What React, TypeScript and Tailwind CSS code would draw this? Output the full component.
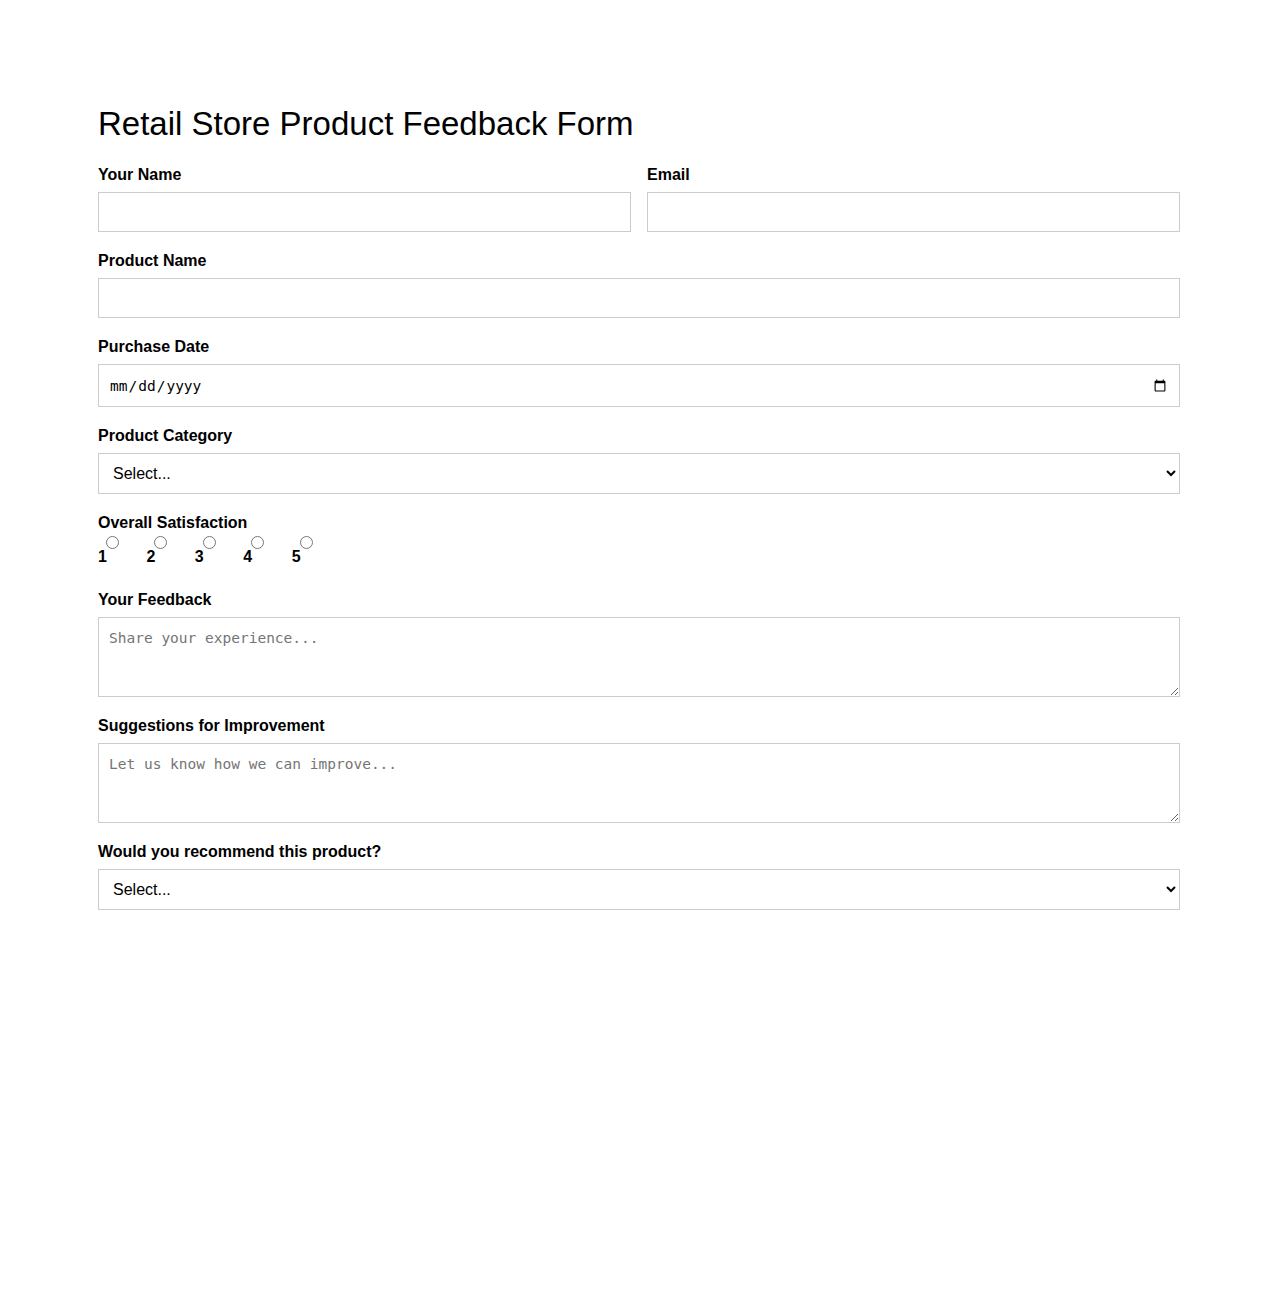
import React from 'react';

const labelCls = "block mb-2 text-[16px] leading-[18px] font-bold text-black";
const inputCls = "block w-full h-[40px] px-[10px] border border-[#ccc] bg-white text-[16px] outline-none";
const areaCls =
  "block w-full h-[80px] px-[10px] pt-[11px] pb-[10px] border border-[#ccc] bg-white text-[14.5px] leading-[19px] font-['DejaVu_Sans_Mono',monospace] placeholder:text-[#757575] outline-none";
const selectCls = "block w-full h-[41px] px-[10px] border border-[#ccc] bg-white text-[16px] text-black outline-none";

function Field({ label, children }: { label: string; children: React.ReactNode }) {
  return (
    <div>
      <label className={labelCls}>{label}</label>
      {children}
    </div>
  );
}

export default function App() {
  const ratings = [1, 2, 3, 4, 5];

  return (
    <div className="min-h-[1300px] bg-white font-['Liberation_Sans',Arial,sans-serif] text-black">
      <div className="mx-auto w-[1082px] pt-[105px]">
        <h1 className="text-[33px] leading-[38px] font-normal mb-[23px]">Retail Store Product Feedback Form</h1>

        <form className="flex flex-col gap-[20px]">
          <div className="grid grid-cols-2 gap-4">
            <Field label="Your Name">
              <input type="text" className={inputCls} />
            </Field>
            <Field label="Email">
              <input type="email" className={inputCls} />
            </Field>
          </div>

          <Field label="Product Name">
            <input type="text" className={inputCls} />
          </Field>

          <Field label="Purchase Date">
            <input
              type="date"
              className="block w-full h-[43px] px-[10px] pt-[2px] border border-[#ccc] bg-white text-[14.5px] font-['DejaVu_Sans_Mono',monospace] outline-none"
            />
          </Field>

          <Field label="Product Category">
            <select className={selectCls} defaultValue="">
              <option value="">Select...</option>
              <option>Electronics</option>
              <option>Clothing</option>
              <option>Home &amp; Garden</option>
              <option>Groceries</option>
              <option>Other</option>
            </select>
          </Field>

          <div>
            <label className="block mb-[4px] text-[16px] leading-[18px] font-bold">Overall Satisfaction</label>
            <div className="flex gap-[27.5px] h-[35px]">
              {ratings.map((r) => (
                <label key={r} className="flex items-start">
                  <span className="pt-[12px] text-[16px] leading-[18px] font-bold">{r}</span>
                  <input type="radio" name="satisfaction" value={r} className="m-0 -ml-[1px] w-[13px] h-[13px]" />
                </label>
              ))}
            </div>
          </div>

          <Field label="Your Feedback">
            <textarea className={areaCls} placeholder="Share your experience..." />
          </Field>

          <Field label="Suggestions for Improvement">
            <textarea className={areaCls} placeholder="Let us know how we can improve..." />
          </Field>

          <Field label="Would you recommend this product?">
            <select className={selectCls} defaultValue="">
              <option value="">Select...</option>
              <option>Yes</option>
              <option>No</option>
              <option>Maybe</option>
            </select>
          </Field>
        </form>
      </div>
    </div>
  );
}
